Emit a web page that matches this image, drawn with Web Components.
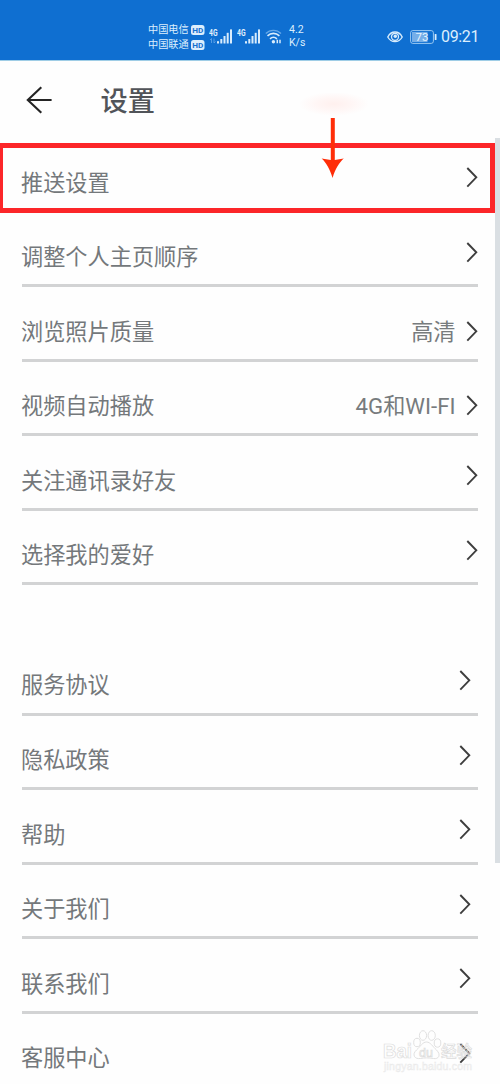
<!DOCTYPE html>
<html lang="zh-CN">
<head>
<meta charset="utf-8">
<title>设置</title>
<style>
html,body{margin:0;background:#fefefe}
body{font-family:Roboto,"Noto Sans CJK SC",sans-serif}
</style>
</head>
<body>
<settings-page></settings-page>
<script>
function define(name, html, setup) {
  const t = document.createElement('template');
  t.innerHTML = html;
  customElements.define(name, class extends HTMLElement {
    constructor() {
      super();
      this.attachShadow({mode: 'open'}).appendChild(t.content.cloneNode(true));
    }
    connectedCallback() { if (setup) setup(this, this.shadowRoot); }
  });
}

define('signal-icon', `
<style>
:host{display:block;width:24px;height:18px}
svg{display:block}
text{font:700 9px Roboto,sans-serif;fill:#e1f1fd}
</style>
<svg width="24" height="18" viewBox="0 0 24 18">
<text x="0" y="8" textLength="8.5" lengthAdjust="spacingAndGlyphs">4G</text>
<g fill="#d8ecfc"><rect x="8" y="13.2" width="2" height="2.3"/><rect x="11.3" y="11" width="2" height="4.5"/><rect x="14.5" y="8" width="2" height="7.5"/><rect x="17.7" y="4.8" width="2" height="10.7"/><rect x="21" y="1.4" width="2" height="14.1"/></g>
<path class="data" d="M2.5 10.5v4.5M1 12l1.5-1.5M5 10.5v4.5l1.5-1.5" fill="none" stroke="#5da2e6" stroke-width=".9"/>
</svg>`, (el, r) => { if (!el.hasAttribute('data')) r.querySelector('.data').remove(); });

define('carrier-name', `
<style>
:host{display:flex;align-items:center;height:15px;font-size:10.2px;line-height:15px;color:#dceefd;white-space:nowrap}
svg{display:block;margin-left:2px}
text{font:700 8px Roboto,sans-serif;fill:#1670cf}
</style><slot></slot><svg width="14" height="10" viewBox="0 0 14 10"><rect width="13.5" height="10" rx="2.5" fill="#dceefd"/><text x="1.3" y="7.9" textLength="11" lengthAdjust="spacingAndGlyphs">HD</text></svg>`);

define('status-bar', `
<style>
:host{display:flex;box-sizing:border-box;height:61px;background:#0f6fd1;border-bottom:1px solid #9fcde6;padding:0 20px 0 148px;align-items:flex-start;color:#dceefd}
.carriers{padding-top:22px;width:57px}
signal-icon{margin:28px 0 0 4px}
.wifi{margin:28px 0 0 4px}
.speed{margin:24px 0 0 6px;font-size:10.5px;line-height:12.7px}
.right{display:flex;align-items:center;margin-left:auto;height:20px;margin-top:27px}
.bat{margin:0 4px 0 7px}
.time{font-size:16px;line-height:20px;width:39px;white-space:nowrap;letter-spacing:-.35px}
svg{display:block}
.bat text{font:400 11.5px Roboto,sans-serif;fill:#e6f4ff}
</style>
<div class="carriers"><carrier-name>中国电信</carrier-name><carrier-name>中国联通</carrier-name></div>
<signal-icon data></signal-icon><signal-icon></signal-icon>
<svg class="wifi" width="18" height="18" viewBox="0 0 18 18" fill="none" stroke="#d8ecfc" stroke-width="1.6">
<path d="M.8 5.5C5 1.2 11.8 1.2 16 5.5" stroke="#67a9e8" stroke-width="1.2"/><path d="M2.5 7.8c3.5-3.2 8.4-3.2 11.9 0M5 10.8c2-1.9 4.9-1.9 6.9 0"/><circle cx="8.4" cy="13.7" r="1.7" fill="#d8ecfc" stroke="none"/><path d="M12.3 11.8v3.4M15 11.8v3.4" stroke-width="1.5"/></svg>
<div class="speed">4.2<br>K/s</div>
<div class="right">
<svg width="16" height="14" viewBox="0 0 16 14"><path d="M.8 7C4.2 .4 11.8 .4 15.2 7 11.8 13.2 4.2 13.2 .8 7Z" fill="none" stroke="#d8ecfc" stroke-width="1.4"/><circle cx="8" cy="6.8" r="3.5" fill="none" stroke="#d8ecfc" stroke-width="1.3"/><circle cx="8.3" cy="6.3" r="1.7" fill="#d8ecfc"/></svg>
<svg class="bat" width="27" height="14" viewBox="0 0 27 14"><rect x=".6" y=".6" width="22.8" height="12.8" rx="2.2" fill="none" stroke="#9bc9f2"/><rect x="2" y="2" width="15.5" height="10" fill="#75aee8"/><rect x="24.7" y="4" width="1.8" height="6" rx=".6" fill="#dceefd"/><text x="12" y="11" text-anchor="middle">73</text></svg>
<div class="time">09:21</div></div>`);

define('title-bar', `
<style>
:host{display:flex;align-items:center;height:77px}
svg{margin:0 0 0 26px;display:block}
h1{margin:5px 0 0 48.5px;font-size:27.2px;line-height:40px;font-weight:500;color:#515459}
</style>
<svg width="26" height="28" viewBox="0 0 26 28" fill="none" stroke="#242424" stroke-width="2.1"><path d="M15.3 1.2 1.8 14l13.5 12.7M2 14h23.6"/></svg>
<h1><slot></slot></h1>`);

define('setting-row', `
<style>
:host{display:flex;box-sizing:border-box;height:74.55px;margin:0 22px;border-bottom:3px solid #d2d3d4;align-items:flex-start;font-size:22.2px;line-height:32px;color:#74787b}
.label{padding-top:28.5px;margin-left:-1px;flex:1}
.value{padding-top:28.5px;margin-right:10.5px;color:#777b7d}
svg{margin-top:29px;display:block}
:host([value]) svg{margin-top:33.5px}
:host([inset]) svg{margin-right:7px}
</style>
<div class="label"><slot></slot></div><div class="value"></div>
<svg width="12" height="21" viewBox="0 0 12 21" fill="none" stroke="#3e3e3e" stroke-width="1.9"><path d="M1.3 1l9 9.3L1.3 19.6"/></svg>`,
(el, r) => { r.querySelector('.value').textContent = el.getAttribute('value') || ''; });

define('push-highlight', `
<style>
:host{position:absolute;left:0;top:143px;width:495px;height:70px;box-sizing:border-box;border:5px solid #fc2629;border-left-width:3px;pointer-events:none}
svg{position:absolute;left:297px;top:-55px}
</style>
<svg width="72" height="90" viewBox="0 0 72 90"><defs><radialGradient id="g"><stop offset="0" stop-color="#fff0ee"/><stop offset=".5" stop-color="#fff6f5"/><stop offset="1" stop-color="#fefefe"/></radialGradient></defs><ellipse cx="34" cy="11" rx="35" ry="12" fill="url(#g)"/><path d="M30.8 25h4v42l9-1.5c-4.5 4-8.5 10-11.2 19.5-3-9.5-6.5-15.5-11-19.5l9.2 1.5z" fill="#ff2d08"/></svg>`);

define('brand-watermark', `
<style>
:host{position:absolute;left:382px;top:1028px;pointer-events:none}
svg{display:block}
text{font-family:"Liberation Sans","Noto Sans CJK SC",sans-serif;fill:none;stroke:#dcdcdc;stroke-width:.7}
</style>
<svg width="95" height="48" viewBox="0 0 95 48">
<g fill="none" stroke="#dcdcdc" stroke-width=".9"><ellipse cx="41" cy="7.5" rx="3.6" ry="4.8"/><ellipse cx="49.7" cy="7.5" rx="3.6" ry="4.8"/><ellipse cx="35" cy="14.5" rx="3.3" ry="4.2"/><ellipse cx="55.5" cy="15" rx="3.3" ry="4.2"/><path d="M44.5 14c4 0 6 4.500 10 8 5 5 2 9.500-3 8.500-5-.8-9-.8-13 0-6 1-9-4-4-8.500 4-3.500 6-8 10-8Z"/></g>
<text x="1" y="29.5" font-size="20" textLength="29" lengthAdjust="spacingAndGlyphs" font-weight="700">Bai</text>
<text x="37" y="28.5" font-size="12.5" font-weight="400">du</text>
<text x="59" y="29" font-size="15.5" font-weight="500" textLength="31" lengthAdjust="spacingAndGlyphs">经验</text>
<text x="2" y="41.5" font-size="10.5" textLength="88" style="fill:#f6f6f6;stroke:#e9e9e9;stroke-width:.4">jingyan.baidu.com</text>
</svg>`);

define('settings-page', `
<style>
:host{display:block;position:relative;width:500px;height:1084px;overflow:hidden;background:#fefefe}
.gap{height:55.7px}
.scroll{position:absolute;right:0;top:138px;width:5px;height:725px;background:#dadfe3}
</style>
<status-bar></status-bar>
<title-bar>设置</title-bar>
<main>
<setting-row>推送设置</setting-row>
<setting-row>调整个人主页顺序</setting-row>
<setting-row value="高清">浏览照片质量</setting-row>
<setting-row value="4G和WI-FI">视频自动播放</setting-row>
<setting-row>关注通讯录好友</setting-row>
<setting-row>选择我的爱好</setting-row>
<div class="gap"></div>
<setting-row inset>服务协议</setting-row>
<setting-row inset>隐私政策</setting-row>
<setting-row inset>帮助</setting-row>
<setting-row inset>关于我们</setting-row>
<setting-row inset>联系我们</setting-row>
<setting-row inset>客服中心</setting-row>
</main>
<div class="scroll"></div>
<brand-watermark></brand-watermark>
<push-highlight></push-highlight>`);
</script>
</body>
</html>
